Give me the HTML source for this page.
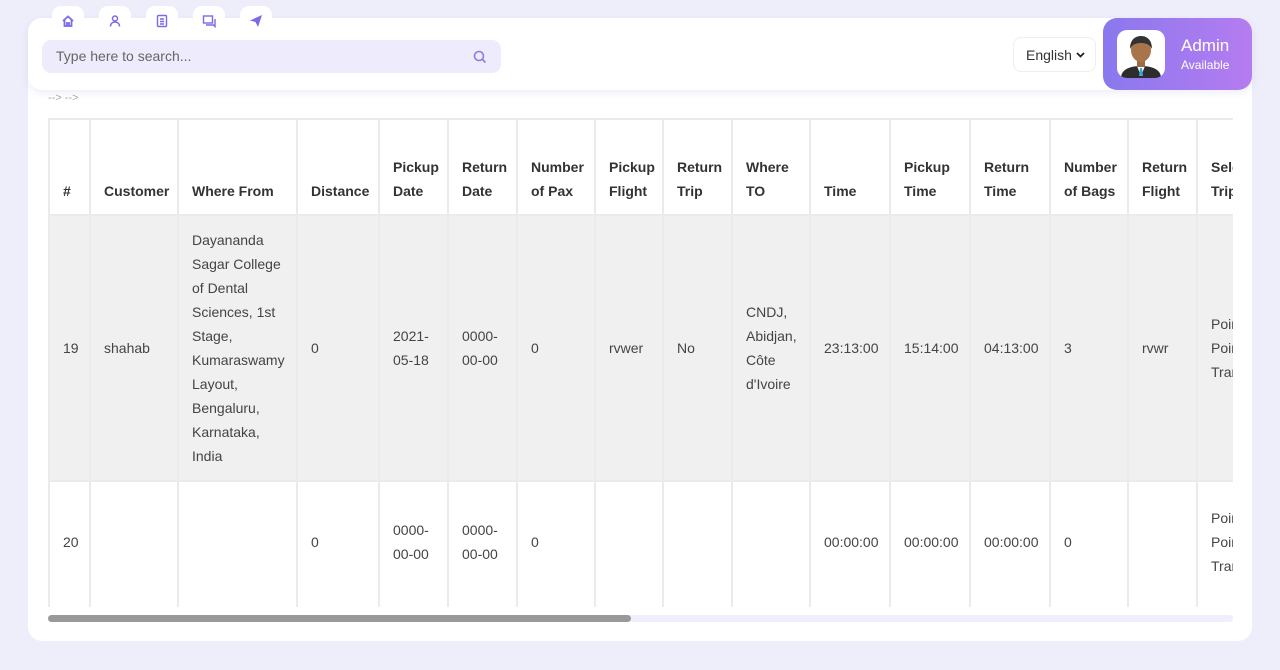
<!DOCTYPE html>
<html><head><meta charset="utf-8"><style>
*{box-sizing:border-box;margin:0;padding:0}
body{width:1280px;height:670px;background:#eeedfa;font-family:"Liberation Sans",sans-serif;position:relative;overflow:hidden;color:#333}
.card{position:absolute;left:28px;top:18px;width:1224px;height:623px;background:#fff;border-radius:14px}
.hdr{position:absolute;left:28px;top:18px;width:1224px;height:72px;background:#fff;border-radius:14px;box-shadow:0 3px 8px rgba(120,110,200,.12)}
.tab{position:absolute;top:6px;width:32px;height:26px;background:#fff;border-radius:9px 9px 0 0;display:flex;justify-content:center;padding-top:8px}
.search{position:absolute;left:42px;top:40px;width:459px;height:33px;background:#edebfc;border-radius:9px;font-size:14px;color:#666;padding:8px 14px}
.lang{position:absolute;left:1013px;top:37px;width:83px;height:35px;border:1px solid #eee;border-radius:8px;font-size:14px;color:#333;padding:0 10px 0 12px;display:flex;align-items:center;justify-content:space-between}
.admin{position:absolute;left:1103px;top:18px;width:149px;height:72px;border-radius:14px;background:linear-gradient(90deg,#8a78ee,#b57cf0)}
.av{position:absolute;left:14px;top:12px;width:48px;height:48px;background:#fff;border-radius:10px;overflow:hidden}
.wrap{position:absolute;left:48px;top:118px;width:1185px;height:489px;overflow:hidden}
table{border-collapse:separate;border-spacing:2px;background:#ebebeb;table-layout:fixed;font-size:14px;width:1270px}
td,th{padding:0 4px 0 13px;vertical-align:middle;text-align:left;line-height:24px;overflow:hidden}
th{background:#fff;height:94px;font-weight:bold;color:#333;font-size:14px;vertical-align:bottom;padding-bottom:11px}
tr.a td{background:#f0f0f0;height:264px}
tr.b td{background:#fff;height:150px;padding-bottom:30px}
td{color:#444}
</style></head><body>
<div class="card"></div>
<div class="hdr"></div>
<div class="tab" style="left:52px"><svg width="14" height="14" viewBox="0 0 14 14" fill="none" stroke="#7a6ae6" stroke-width="1.8"><path d="M2 7L7 2.5 12 7M3.5 6v6h7V6"/><path d="M6 12V9h2v3"/></svg></div>
<div class="tab" style="left:99px"><svg width="14" height="14" viewBox="0 0 14 14" fill="none" stroke="#7a6ae6" stroke-width="1.5"><circle cx="7" cy="4.5" r="2.5"/><path d="M2.5 12.5c0-3 2-4.5 4.5-4.5s4.5 1.5 4.5 4.5"/></svg></div>
<div class="tab" style="left:146px"><svg width="14" height="14" viewBox="0 0 14 14" fill="none" stroke="#7a6ae6" stroke-width="1.4"><rect x="2.5" y="1.5" width="9" height="11" rx="1"/><path d="M5 5h4M5 7.5h4M5 10h4"/></svg></div>
<div class="tab" style="left:193px"><svg width="14" height="14" viewBox="0 0 14 14" fill="none" stroke="#7a6ae6" stroke-width="1.4"><rect x="1.5" y="2" width="9" height="7"/><path d="M4 11h7.5l1.5 1.5V5"/></svg></div>
<div class="tab" style="left:240px"><svg width="14" height="14" viewBox="0 0 14 14"><path d="M1 6.5L13 1 9 13 6.5 8z" fill="#7a6ae6"/></svg></div>
<div class="search">Type here to search...<svg style="position:absolute;right:14px;top:10px" width="14" height="14" viewBox="0 0 14 14" fill="none" stroke="#8a7de6" stroke-width="1.6"><circle cx="6" cy="6" r="4.5"/><path d="M9.5 9.5L12.5 12.5"/></svg></div>
<div style="position:absolute;left:48px;top:92px;font-size:11px;color:#aaa">--&gt; --&gt;</div>
<div class="lang"><span>English</span><svg width="9" height="6" viewBox="0 0 9 6"><path d="M1 1l3.5 3.5L8 1" fill="none" stroke="#222" stroke-width="1.8"/></svg></div>
<div class="admin"><div class="av"><svg width="48" height="48" viewBox="0 0 48 48"><path d="M4 48c0-8 8-12 20-12s20 4 20 12z" fill="#2d2d2d"/><path d="M20 36h8l-4 10z" fill="#fff"/><path d="M23 38h2l1 8h-4z" fill="#3aa8d8"/><rect x="20" y="28" width="8" height="9" fill="#9c6b44"/><ellipse cx="24" cy="20" rx="10" ry="12" fill="#a8744a"/><path d="M13 19c0-10 6-13 11-13s11 3 11 13c-2-4-5-6-11-6s-9 2-11 6z" fill="#333"/></svg></div>
<div style="position:absolute;left:78px;top:18px;color:#fff;font-size:17px">Admin</div>
<div style="position:absolute;left:78px;top:40px;color:#fff;font-size:12px">Available</div></div>
<div class="wrap"><table>
<tr><th style="width:39px">#</th><th style="width:86px">Customer</th><th style="width:117px">Where From</th><th style="width:80px">Distance</th><th style="width:67px">Pickup Date</th><th style="width:67px">Return Date</th><th style="width:76px">Number of Pax</th><th style="width:66px">Pickup Flight</th><th style="width:67px">Return Trip</th><th style="width:76px">Where TO</th><th style="width:78px">Time</th><th style="width:78px">Pickup Time</th><th style="width:78px">Return Time</th><th style="width:76px">Number of Bags</th><th style="width:67px">Return Flight</th><th style="width:80px">Select Trip Type</th><th></th></tr>
<tr class="a"><td>19</td><td>shahab</td><td>Dayananda Sagar College of Dental Sciences, 1st Stage, Kumaraswamy Layout, Bengaluru, Karnataka, India</td><td>0</td><td>2021-05-18</td><td>0000-00-00</td><td>0</td><td>rvwer</td><td>No</td><td>CNDJ, Abidjan, Côte d'Ivoire</td><td>23:13:00</td><td>15:14:00</td><td>04:13:00</td><td>3</td><td>rvwr</td><td>Point to Point Transfer</td><td></td></tr>
<tr class="b"><td>20</td><td></td><td></td><td>0</td><td>0000-00-00</td><td>0000-00-00</td><td>0</td><td></td><td></td><td></td><td>00:00:00</td><td>00:00:00</td><td>00:00:00</td><td>0</td><td></td><td>Point to Point Transfer</td><td></td></tr>
</table></div>
<div style="position:absolute;left:48px;top:607px;width:1185px;height:34px;background:#fff"></div>
<div style="position:absolute;left:48px;top:615px;width:1185px;height:7px;background:#efeefc;border-radius:4px"></div>
<div style="position:absolute;left:48px;top:615px;width:583px;height:7px;background:#999;border-radius:4px"></div>
</body></html>
